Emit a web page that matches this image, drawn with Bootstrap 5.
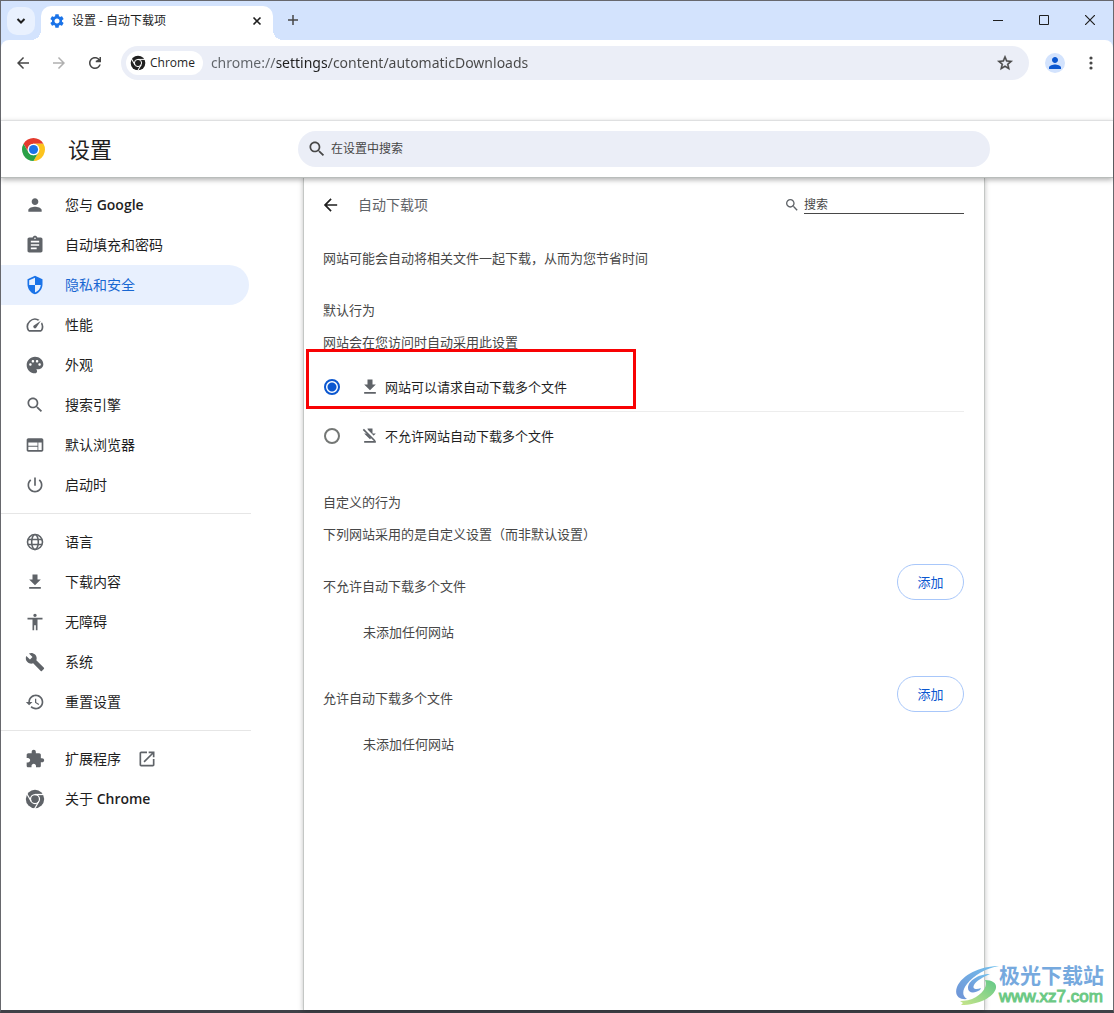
<!DOCTYPE html>
<html lang="zh-CN">
<head>
<meta charset="utf-8">
<meta name="viewport" content="width=device-width, initial-scale=1">
<title>设置 - 自动下载项</title>
<link href="https://cdn.jsdelivr.net/npm/bootstrap@5.3.0/dist/css/bootstrap.min.css" rel="stylesheet">
<style>
:root{--icon:#5f6368;--ink:#1f1f1f;--soft:#474747;--field:#ebeef7;--blue:#0b57d0}
body{font-family:"Open Sans","Noto Sans CJK SC",sans-serif;font-size:13px;line-height:20px;color:var(--soft);background:#fff}
svg{display:block;flex:none;fill:currentColor}
.win{min-height:100vh;border:1px solid #67686d;border-bottom:3px solid #3f4147}
.plain{border:0;background:none;padding:0;color:inherit;display:flex;align-items:center;justify-content:center}
/* tab strip */
.strip{height:39px;background:#d3e3fd;color:var(--ink);padding-left:6px}
.tabmenu{width:28px;height:28px;border-radius:10px;background:#e9f1fe}
.tab{width:232px;height:34px;margin-left:6px;padding:0 7px 5px 9px;background:#fff;border-radius:10px 10px 0 0;font-size:12px;position:relative}
.tab::before,.tab::after{content:"";position:absolute;bottom:0;width:10px;height:10px}
.tab::before{right:100%;background:radial-gradient(circle at 0 0,transparent 10px,#fff 10px)}
.tab::after{left:100%;background:radial-gradient(circle at 100% 0,transparent 10px,#fff 10px)}
.newtab{margin:0 0 2px 15px}
.winbtn{width:46px;height:38px}
/* toolbar */
.underlay{background:#d3e3fd}
.tools{background:#fff;border-radius:8px 8px 0 0;height:80px;padding:6px 12px 0;color:var(--soft)}
.tool{width:20px;height:34px}
.omni{height:34px;border-radius:17px;background:var(--field);padding:0 15px 0 5px;min-width:0}
.chip{height:24px;border-radius:12px;background:#fff;color:var(--ink);padding:0 8px 0 4px;font-size:12px}
.url{border:0;outline:0;padding:0;min-width:0;font-family:"Noto Sans",sans-serif;font-size:14px;color:transparent;background:linear-gradient(90deg,#5f6368 66px,#1f1f1f 66px 118px,#474747 118px);-webkit-background-clip:text;background-clip:text}
.avatar{width:20px;height:20px;border-radius:50%;background:#d3e3fd;color:var(--blue)}
/* settings header */
.top{height:58px;border-top:1px solid #dfe0e1;border-bottom:1px solid #b9bdbb;box-shadow:0 2px 5px rgba(0,0,0,.3);background:#fff;position:relative;z-index:2}
.brand{width:297px;padding-left:21px;gap:23px}
.brand h1{font-size:22px;line-height:30px;color:var(--ink);font-weight:400}
.find{width:692px;height:36px;border-radius:18px;background:var(--field);padding:0 9px}
.find input,.subfind input{border:0;outline:0;background:none;padding:0;font-size:12px;min-width:0;color:var(--soft)}
input::placeholder{color:var(--soft);opacity:1}
/* menu */
.menu{width:302px;flex:none;padding-top:7px}
.item{height:40px;width:248px;padding-left:24px;gap:20px;font-size:14px;font-weight:600;color:var(--ink);text-decoration:none;border-radius:0 20px 20px 0}
.item span{font-weight:400}
.item svg{color:var(--icon)}
.item.on{background:#e8f0fe;color:#1967d2}
.item.on svg{color:#1a73e8}
.rule{width:250px;height:1px;background:#e6e6e6;margin:8px 0}
/* page */
.page{width:682px;flex:0 1 682px;min-width:0;padding:0 20px 0 19px;border:solid #c4c7c5;border-width:0 1px;box-shadow:0 1px 5px rgba(0,0,0,.25)}
.head{height:54px}
.head h2{font-size:14px;line-height:20px;font-weight:400;color:var(--icon)}
.subfind input{width:160px;height:18px;border-bottom:1px solid #474747}
.page h3,.page p{font-size:13px;line-height:20px;font-weight:400;margin:0}
.choices{padding-top:11px}
.choice{height:48px;color:var(--ink);position:relative}
.choice label{gap:5px}
.choice svg{color:var(--icon)}
.radio{appearance:none;width:16px;height:16px;margin:0 20px 0 1px;border:2px solid #747775;border-radius:50%;flex:none}
.radio:checked{border-color:var(--blue);background:radial-gradient(circle,var(--blue) 4px,#fff 5px)}
.marker{position:absolute;left:-17px;top:-14px;width:330px;height:60px;border:3px solid #f80204;pointer-events:none}
.split{height:1px;background:#ededed;margin-left:37px}
.add{width:67px;height:36px;border:1px solid #a8c7fa;border-radius:18px;background:#fff;color:var(--blue);font-size:13px;padding:0}
.site{height:112px}
.page .none{padding:22px 0 0 40px}
/* site badge */
.stamp{position:absolute;right:9px;bottom:3px;z-index:3;color:#76a9de}
.stamp b{font-size:21px;line-height:24px}
.stamp i{font:normal 17px/20px "Liberation Sans",sans-serif;color:#6cc985;-webkit-text-stroke:1px #6cc985}
</style>
<script src="https://cdn.jsdelivr.net/npm/bootstrap@5.3.0/dist/js/bootstrap.bundle.min.js"></script>
</head>
<body>
<svg width="0" height="0" class="position-absolute" aria-hidden="true">
  <symbol id="mono" viewBox="0 0 24 24"><circle cx="12" cy="12" r="11"/><g fill="none" stroke="#fff" stroke-width="1.5"><circle cx="12" cy="12" r="5.4"/><path d="M12 6.6h11"/><path d="M12 6.6h11" transform="rotate(120 12 12)"/><path d="M12 6.6h11" transform="rotate(240 12 12)"/></g></symbol>
  <symbol id="search" viewBox="0 0 24 24"><path d="M15.5 14h-.79l-.28-.27C15.41 12.59 16 11.11 16 9.5 16 5.91 13.09 3 9.5 3S3 5.91 3 9.5 5.91 16 9.5 16c1.61 0 3.09-.59 4.23-1.57l.27.28v.79l5 4.99L20.49 19l-4.99-5zm-6 0C7.01 14 5 11.99 5 9.5S7.01 5 9.5 5 14 7.01 14 9.5 11.99 14 9.5 14z"/></symbol>
  <symbol id="person" viewBox="0 0 24 24"><path d="M12 12c2.21 0 4-1.79 4-4s-1.79-4-4-4-4 1.79-4 4 1.79 4 4 4zm0 2c-2.67 0-8 1.34-8 4v2h16v-2c0-2.66-5.33-4-8-4z"/></symbol>
  <symbol id="back" viewBox="0 0 24 24"><path d="M20 11H7.83l5.59-5.59L12 4l-8 8 8 8 1.41-1.41L7.83 13H20v-2z"/></symbol>
  <symbol id="down" viewBox="0 0 24 24"><path d="M19 9h-4V3H9v6H5l7 7 7-7zM5 18v2h14v-2H5z"/></symbol>
</svg>
<div class="win d-flex flex-column position-relative">
  <header>
    <div class="strip d-flex align-items-end">
      <button class="plain tabmenu align-self-center" aria-label="搜索标签页"><svg width="10" height="10" viewBox="0 0 10 10"><path d="M1.5 3 5 6.5 8.500 3" fill="none" stroke="currentColor" stroke-width="2"/></svg></button>
      <div class="tab d-flex align-items-center">
        <svg width="14" height="14" viewBox="2 2 20 20" style="color:#1a73e8"><path d="M19.140 12.940c.04-.3.06-.61.06-.94 0-.32-.02-.64-.07-.94l2.030-1.580c.18-.14.23-.41.12-.61l-1.920-3.320c-.12-.22-.37-.29-.59-.22l-2.390.96c-.5-.38-1.030-.7-1.620-.94l-.36-2.540c-.04-.24-.24-.41-.48-.41h-3.840c-.24 0-.43.17-.47.41l-.36 2.540c-.59.24-1.130.57-1.620.94l-2.390-.96c-.22-.08-.47 0-.59.22L2.740 8.870c-.12.21-.08.47.12.61l2.030 1.580c-.05.3-.09.63-.09.94s.02.64.07.94l-2.030 1.580c-.18.14-.23.41-.12.61l1.920 3.320c.12.22.37.29.59.22l2.390-.96c.5.38 1.030.7 1.620.94l.36 2.540c.05.24.24.41.48.41h3.840c.24 0 .44-.17.47-.41l.36-2.540c.59-.24 1.130-.56 1.620-.94l2.390.96c.22.08.47 0 .59-.22l1.920-3.320c.12-.22.07-.47-.12-.61l-2.010-1.580zM12 15.600c-1.980 0-3.600-1.620-3.600-3.600s1.620-3.600 3.600-3.600 3.600 1.620 3.600 3.600-1.620 3.600-3.600 3.600z"/></svg>
        <span class="ms-2 flex-grow-1">设置 - 自动下载项</span>
        <button class="plain p-1" aria-label="关闭标签页"><svg width="10" height="10" viewBox="0 0 10 10"><path d="m1.500 1.500 7 7m0-7-7 7" fill="none" stroke="currentColor" stroke-width="1.600"/></svg></button>
      </div>
      <button class="plain newtab align-self-center" aria-label="新标签页"><svg width="10" height="10" viewBox="0 0 10 10"><path d="M5 0v10M0 5h10" stroke="#474747" stroke-width="1.500"/></svg></button>
      <div class="d-flex ms-auto align-self-start">
        <button class="plain winbtn" aria-label="最小化"><svg width="10" height="10" viewBox="0 0 10 10"><path d="M0 5h10v1H0z"/></svg></button>
        <button class="plain winbtn" aria-label="最大化"><svg width="10" height="10" viewBox="0 0 10 10"><path d="M.5.5h9v9h-9z" fill="none" stroke="currentColor"/></svg></button>
        <button class="plain winbtn" aria-label="关闭"><svg width="10" height="10" viewBox="0 0 10 10"><path d="m0 0 10 10M10 0 0 10" stroke="currentColor" stroke-width="1.200"/></svg></button>
      </div>
    </div>
    <div class="underlay"><div class="tools d-flex align-items-start">
      <button class="plain tool" aria-label="后退"><svg width="18" height="18"><use href="#back"/></svg></button>
      <button class="plain tool ms-3" aria-label="前进" disabled><svg width="18" height="18" viewBox="0 0 24 24" style="color:#b0b0b0"><path d="m12 4-1.410 1.410L16.170 11H4v2h12.170l-5.580 5.590L12 20l8-8z"/></svg></button>
      <button class="plain tool ms-3" aria-label="重新加载"><svg width="18" height="18" viewBox="0 0 24 24"><path d="M17.650 6.350C16.200 4.900 14.210 4 12 4c-4.420 0-7.990 3.580-7.990 8s3.570 8 7.990 8c3.730 0 6.840-2.550 7.730-6h-2.080c-.82 2.330-3.040 4-5.650 4-3.310 0-6-2.690-6-6s2.690-6 6-6c1.660 0 3.140.69 4.220 1.780L13 9v2h7V4h-2v2.700z"/></svg></button>
      <div class="omni d-flex align-items-center flex-grow-1 ms-3">
        <div class="chip d-flex align-items-center gap-1 me-2"><svg width="16" height="16"><use href="#mono"/></svg>Chrome</div>
        <input class="url flex-grow-1" aria-label="地址" value="chrome://settings/content/automaticDownloads">
        <button class="plain" aria-label="为此标签页添加书签"><svg width="18" height="18" viewBox="0 0 24 24"><path d="M22 9.240l-7.190-.62L12 2 9.190 8.630 2 9.240l5.460 4.730L5.820 21 12 17.270 18.180 21l-1.630-7.030L22 9.240zM12 15.400l-3.760 2.270 1-4.280-3.320-2.880 4.380-.38L12 6.100l1.710 4.040 4.380.38-3.320 2.880 1 4.280L12 15.400z" stroke="currentColor" stroke-width=".6"/></svg></button>
      </div>
      <button class="plain tool ms-3" aria-label="个人资料"><span class="avatar d-flex align-items-center justify-content-center"><svg width="18" height="18"><use href="#person"/></svg></span></button>
      <button class="plain tool ms-3" aria-label="更多"><svg width="4" height="14" viewBox="0 0 4 14"><circle cx="2" cy="2" r="1.600"/><circle cx="2" cy="7" r="1.600"/><circle cx="2" cy="12" r="1.600"/></svg></button>
    </div></div>
  </header>
  <div class="top d-flex align-items-center">
    <div class="brand d-flex align-items-center">
      <svg width="23" height="23" viewBox="0 0 48 48"><path fill="#e33b2e" d="M24 12h20.780A24 24 0 0 0 3.220 12L13.600 30A12 12 0 0 1 24 12z"/><path fill="#fcc31e" d="M34.400 30 24 48a24 24 0 0 0 20.780-36H24a12 12 0 0 1 10.400 18z"/><path fill="#2aa147" d="M13.600 30 3.220 12A24 24 0 0 0 24 48l10.400-18a12 12 0 0 1-20.800 0z"/><circle cx="24" cy="24" r="12" fill="#fff"/><circle cx="24" cy="24" r="9.500" fill="#1a73e8"/></svg>
      <h1 class="m-0">设置</h1>
    </div>
    <label class="find d-flex align-items-center gap-1"><svg width="20" height="20"><use href="#search"/></svg><input class="flex-grow-1" type="search" placeholder="在设置中搜索" aria-label="在设置中搜索"></label>
  </div>
  <div class="d-flex flex-grow-1">
    <nav class="menu" aria-label="设置">
      <a class="item d-flex align-items-center" href="#"><svg width="20" height="20"><use href="#person"/></svg><div><span>您与</span> Google</div></a>
      <a class="item d-flex align-items-center" href="#"><svg width="20" height="20" viewBox="0 0 24 24"><path d="M19 3h-4.180C14.400 1.840 13.300 1 12 1c-1.300 0-2.400.84-2.820 2H5c-1.100 0-2 .9-2 2v14c0 1.100.9 2 2 2h14c1.100 0 2-.9 2-2V5c0-1.100-.9-2-2-2zm-7 0c.55 0 1 .45 1 1s-.45 1-1 1-1-.45-1-1 .45-1 1-1zm2 14H7v-2h7v2zm3-4H7v-2h10v2zm0-4H7V7h10v2z"/></svg><span>自动填充和密码</span></a>
      <a class="item on d-flex align-items-center" href="#" aria-current="page"><svg width="20" height="20" viewBox="0 0 24 24"><path d="M12 1L3 5v6c0 5.550 3.840 10.740 9 12 5.160-1.260 9-6.450 9-12V5l-9-4zm0 10.990h7c-.53 4.120-3.280 7.790-7 8.940V12H5V6.300l7-3.110v8.800z"/></svg><span>隐私和安全</span></a>
      <a class="item d-flex align-items-center" href="#"><svg width="20" height="20" viewBox="0 0 24 24"><path d="M20.380 8.570l-1.230 1.850a8 8 0 0 1-.22 7.580H5.070A8 8 0 0 1 15.580 6.850l1.850-1.230A10 10 0 0 0 3.350 19a2 2 0 0 0 1.720 1h13.850a2 2 0 0 0 1.740-1 10 10 0 0 0-.27-10.440zm-9.790 6.840a2 2 0 0 0 2.830 0l5.660-8.490-8.490 5.660a2 2 0 0 0 0 2.830z"/></svg><span>性能</span></a>
      <a class="item d-flex align-items-center" href="#"><svg width="20" height="20" viewBox="0 0 24 24"><path d="M12 2C6.490 2 2 6.490 2 12s4.490 10 10 10c1.380 0 2.500-1.120 2.500-2.500 0-.61-.23-1.200-.64-1.670-.08-.1-.13-.21-.13-.33 0-.28.22-.5.5-.5H16c3.310 0 6-2.690 6-6 0-4.960-4.490-9-10-9zm5.500 11c-.83 0-1.500-.67-1.500-1.500s.67-1.500 1.500-1.500 1.500.67 1.500 1.500-.67 1.500-1.500 1.500zm-3-4c-.83 0-1.500-.67-1.500-1.500S13.670 6 14.500 6s1.500.67 1.500 1.500S15.330 9 14.500 9zM5 11.500c0-.83.67-1.500 1.500-1.500s1.500.67 1.500 1.500S7.330 13 6.500 13 5 12.330 5 11.500zm6-4c0 .83-.67 1.500-1.500 1.500S8 8.330 8 7.500 8.670 6 9.500 6s1.500.67 1.500 1.500z"/></svg><span>外观</span></a>
      <a class="item d-flex align-items-center" href="#"><svg width="20" height="20"><use href="#search"/></svg><span>搜索引擎</span></a>
      <a class="item d-flex align-items-center" href="#"><svg width="20" height="20" viewBox="0 0 24 24"><path d="M20 4H4c-1.100 0-1.990.9-1.990 2L2 18c0 1.100.9 2 2 2h16c1.100 0 2-.9 2-2V6c0-1.100-.9-2-2-2zm-5 14H4v-4h11v4zm0-5H4V9h11v4zm5 5h-4V9h4v9z"/></svg><span>默认浏览器</span></a>
      <a class="item d-flex align-items-center" href="#"><svg width="20" height="20" viewBox="0 0 24 24"><path d="M13 3h-2v10h2V3zm4.830 2.170l-1.420 1.420C17.990 7.860 19 9.810 19 12c0 3.870-3.130 7-7 7s-7-3.130-7-7c0-2.190 1.010-4.140 2.580-5.420L6.170 5.170C4.230 6.820 3 9.260 3 12c0 4.970 4.030 9 9 9s9-4.030 9-9c0-2.740-1.230-5.180-3.170-6.830z"/></svg><span>启动时</span></a>
      <div class="rule"></div>
      <a class="item d-flex align-items-center" href="#"><svg width="20" height="20" viewBox="0 0 24 24"><g fill="none" stroke="currentColor" stroke-width="1.900"><circle cx="12" cy="12" r="9"/><ellipse cx="12" cy="12" rx="4" ry="9"/><path d="M3.500 9h17M3.500 15h17"/></g></svg><span>语言</span></a>
      <a class="item d-flex align-items-center" href="#"><svg width="20" height="20"><use href="#down"/></svg><span>下载内容</span></a>
      <a class="item d-flex align-items-center" href="#"><svg width="20" height="20" viewBox="0 0 24 24"><path d="M12 2c1.100 0 2 .9 2 2s-.9 2-2 2-2-.9-2-2 .9-2 2-2zm9 7h-6v13h-2v-6h-2v6H9V9H3V7h18v2z"/></svg><span>无障碍</span></a>
      <a class="item d-flex align-items-center" href="#"><svg width="20" height="20" viewBox="0 0 24 24"><path d="M22.700 19l-9.100-9.100c.9-2.300.4-5-1.500-6.900-2-2-5-2.400-7.400-1.300L9 6 6 9 1.600 4.700C.4 7.100.9 10.100 2.900 12.100c1.900 1.900 4.600 2.400 6.900 1.500l9.100 9.100c.4.4 1 .4 1.400 0l2.300-2.300c.5-.4.5-1.100.1-1.400z"/></svg><span>系统</span></a>
      <a class="item d-flex align-items-center" href="#"><svg width="20" height="20" viewBox="0 0 24 24"><path d="M13 3c-4.970 0-9 4.030-9 9H1l3.890 3.890.07.14L9 12H6c0-3.870 3.130-7 7-7s7 3.130 7 7-3.130 7-7 7c-1.930 0-3.680-.79-4.940-2.060l-1.420 1.420C8.270 19.990 10.510 21 13 21c4.970 0 9-4.030 9-9s-4.030-9-9-9zm-1 5v5l4.280 2.540.72-1.210-3.500-2.080V8H12z"/></svg><span>重置设置</span></a>
      <div class="rule"></div>
      <a class="item d-flex align-items-center" href="#"><svg width="20" height="20" viewBox="0 0 24 24"><path d="M20.500 11H19V7c0-1.100-.9-2-2-2h-4V3.500C13 2.120 11.880 1 10.500 1S8 2.120 8 3.500V5H4c-1.100 0-1.990.9-1.990 2v3.800H3.500c1.490 0 2.700 1.210 2.700 2.700s-1.210 2.700-2.700 2.700H2V20c0 1.100.9 2 2 2h3.800v-1.500c0-1.490 1.210-2.700 2.700-2.700 1.490 0 2.700 1.210 2.700 2.700V22H17c1.100 0 2-.9 2-2v-4h1.500c1.380 0 2.500-1.120 2.500-2.500S21.880 11 20.500 11z"/></svg><span>扩展程序</span><svg class="ms-n1" width="20" height="20" viewBox="0 0 24 24" style="margin-left:-4px"><path d="M19 19H5V5h7V3H5c-1.110 0-2 .9-2 2v14c0 1.100.89 2 2 2h14c1.100 0 2-.9 2-2v-7h-2v7zM14 3v2h3.590l-9.830 9.830 1.410 1.410L19 6.410V10h2V3h-7z"/></svg></a>
      <a class="item d-flex align-items-center" href="#"><svg width="20" height="20"><use href="#mono"/></svg><div><span>关于</span> Chrome</div></a>
    </nav>
    <main class="page">
      <div class="head d-flex align-items-center">
        <button class="plain" aria-label="返回"><svg width="15" height="16" viewBox="3 3 18 18" style="color:#1f1f1f"><use href="#back" x="0" y="0" width="24" height="24"/></svg></button>
        <h2 class="m-0 ms-3 ps-1 flex-grow-1">自动下载项</h2>
        <label class="subfind d-flex align-items-center gap-1"><svg width="16" height="16" style="color:#5f6368"><use href="#search"/></svg><input type="search" placeholder="搜索" aria-label="搜索"></label>
      </div>
      <p class="pt-3 mb-3">网站可能会自动将相关文件一起下载，从而为您节省时间</p>
      <h3 class="pt-3">默认行为</h3>
      <p class="mt-2 pt-1">网站会在您访问时自动采用此设置</p>
      <div class="choices">
        <div class="choice d-flex align-items-center">
          <input class="radio" type="radio" name="auto" id="allow" checked>
          <label for="allow" class="d-flex align-items-center"><svg width="20" height="20"><use href="#down"/></svg>网站可以请求自动下载多个文件</label>
          <div class="marker"></div>
        </div>
        <div class="split"></div>
        <div class="choice d-flex align-items-center">
          <input class="radio" type="radio" name="auto" id="block">
          <label for="block" class="d-flex align-items-center"><svg width="20" height="20" viewBox="0 0 24 24"><path d="M19 9h-4V3H9v6H5l7 7 7-7zM5 18v2h14v-2H5z"/><path d="m5 3 14 14" stroke="#fff" stroke-width="4"/><path d="m4 4 14 14" stroke="currentColor" stroke-width="2"/></svg>不允许网站自动下载多个文件</label>
        </div>
      </div>
      <h3 class="mt-3 pt-3">自定义的行为</h3>
      <p class="mt-2 pt-1 mb-3">下列网站采用的是自定义设置（而非默认设置）</p>
      <section class="site pt-1">
        <div class="d-flex justify-content-between align-items-start"><h3 class="mt-2 pt-1">不允许自动下载多个文件</h3><button class="add">添加</button></div>
        <p class="none">未添加任何网站</p>
      </section>
      <section class="site pt-1">
        <div class="d-flex justify-content-between align-items-start"><h3 class="mt-2 pt-1">允许自动下载多个文件</h3><button class="add">添加</button></div>
        <p class="none">未添加任何网站</p>
      </section>
    </main>
  </div>
  <div class="stamp d-flex align-items-center">
    <svg width="44" height="44" viewBox="0 0 44 44"><defs><linearGradient id="g1" x1="1" y1="0" x2="0" y2="1"><stop offset="0" stop-color="#74c2ee"/><stop offset="1" stop-color="#6f93d6"/></linearGradient><linearGradient id="g2" x1="1" y1="0" x2="0" y2="1"><stop offset="0" stop-color="#62c888"/><stop offset="1" stop-color="#c8e58a"/></linearGradient></defs>
    <path fill="url(#g1)" d="M44 3C25 3 7 12 2 24c-3 8 2 13 10 12-5-3-5-9 0-15C19 12 31 5 44 3z"/><path fill="url(#g1)" d="M35 11c-12 0-22 7-22 14 0 5 6 6 12 2l1-2c-5 2-9 1-7-3 2-4 9-8 16-11z"/><path fill="url(#g2)" d="M30 17c3 5-1 12-9 17-5 3-11 4-16 4l3 2-2 2c18 0 33-8 35-17 1-5-4-8-11-8z"/></svg>
    <div class="d-flex flex-column"><b>极光下载站</b><i>www.xz7.com</i></div>
  </div>
</div>
</body>
</html>
